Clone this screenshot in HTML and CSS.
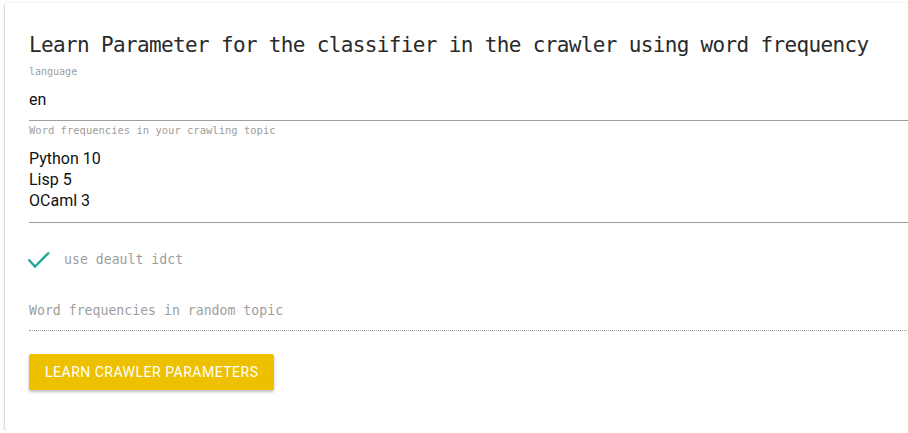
FILE: index.html
```html
<!DOCTYPE html>
<html>
<head>
<meta charset="utf-8">
<link rel="stylesheet" href="styles.css">
</head>
<body>
<div class="card">
  <h1 class="title">Learn Parameter for the classifier in the crawler using word frequency</h1>
  <div class="label lang-label">language</div>
  <div class="input">en</div>
  <div class="label freq-label">Word frequencies in your crawling topic</div>
  <div class="textarea">
    <div>Python 10</div>
    <div>Lisp 5</div>
    <div>OCaml 3</div>
  </div>
  <div class="check-row">
    <svg class="check" width="24" height="18" viewBox="0 0 24 18"><polyline points="1.5,8.5 8,15.5 22,1.5" fill="none" stroke="#26a69a" stroke-width="2.4"/></svg>
    <span class="check-label">use deault idct</span>
  </div>
  <div class="placeholder-field">Word frequencies in random topic</div>
  <button class="btn">Learn crawler parameters</button>
</div>
</body>
</html>
```
FILE: styles.css
```css
html, body {
  margin: 0;
  padding: 0;
  overflow: hidden;
  background: #ffffff;
}
.card {
  margin: 3px 0 0 5px;
  width: 960px;
  padding: 28px 24px 40px 24px;
  background: #fff;
  border-radius: 2px;
  box-shadow: 0 1px 3px rgba(0,0,0,0.25), 0 1px 2px rgba(0,0,0,0.2);
  box-sizing: border-box;
}
.title {
  margin: 0;
  font-family: "DejaVu Sans Mono", monospace;
  font-weight: normal;
  font-size: 21px;
  letter-spacing: -0.65px;
  line-height: 28px;
  color: #2a2a2a;
}
.label {
  font-family: "DejaVu Sans Mono", monospace;
  color: #9e9e9e;
  line-height: 12px;
}
.lang-label {
  font-size: 10px;
  margin-top: 7px;
}
.freq-label {
  font-size: 10.5px;
  margin-top: 3px;
}
.input, .textarea {
  font-family: Roboto, sans-serif;
  font-size: 16px;
  color: #111;
  border-bottom: 1px solid #9e9e9e;
}
.input {
  line-height: 20px;
  padding: 12px 0 10px;
}
.textarea {
  line-height: 21px;
  padding: 12px 0 11px;
}
.check-row {
  display: flex;
  align-items: center;
  gap: 13px;
  margin-top: 27px;
  height: 20px;
}
.check {
  display: block;
  margin-left: -2px;
}
.check-label, .placeholder-field {
  font-family: "DejaVu Sans Mono", monospace;
  font-size: 13.2px;
  line-height: 20px;
  color: #9e9e9e;
}
.placeholder-field {
  margin-top: 31px;
  padding-bottom: 9px;
  border-bottom: 1px dotted #9e9e9e;
}
.btn {
  display: block;
  margin-top: 23px;
  height: 36px;
  padding: 0 16px;
  border: none;
  border-radius: 2px;
  background: #edc000;
  color: #fff;
  font-family: Roboto, sans-serif;
  font-size: 14px;
  text-transform: uppercase;
  letter-spacing: 0.5px;
  box-shadow: 0 2px 3px rgba(0,0,0,0.25);
}
```
